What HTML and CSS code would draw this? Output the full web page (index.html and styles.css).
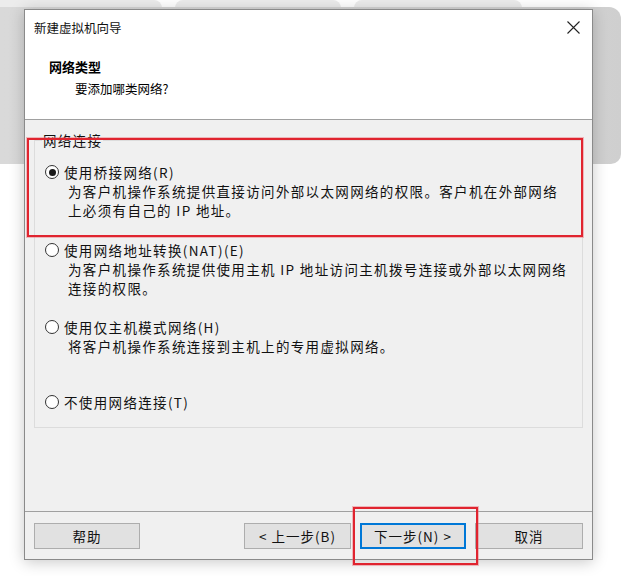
FILE: index.html
```html
<!DOCTYPE html>
<html lang="zh-CN">
<head>
<meta charset="utf-8">
<title>新建虚拟机向导</title>
<link rel="stylesheet" href="styles.css">
</head>
<body>
<div class="desk">
  <div class="tab tab1"></div>
  <div class="tab tab2"></div>
  <div class="tab tab3"></div>
  <div class="backpanel"></div>

  <div class="dialog">
    <div class="header">
      <div class="titlebar">
        <span class="title">新建虚拟机向导</span>
        <svg class="close" width="13" height="13" viewBox="0 0 13 13"><path d="M0.5 0.5L12.5 12.5M12.5 0.5L0.5 12.5" stroke="#222" stroke-width="1.1" fill="none"/></svg>
      </div>
      <div class="h-main">网络类型</div>
      <div class="h-sub">要添加哪类网络?</div>
    </div>

    <div class="body">
      <fieldset class="group">
        <legend>网络连接</legend>
        <div class="opt opt1">
          <span class="radio checked"></span>
          <span class="lbl">使用桥接网络(R)</span>
          <span class="desc">为客户机操作系统提供直接访问外部以太网网络的权限。客户机在外部网络<br>上必须有自己的 IP 地址。</span>
        </div>
        <div class="opt opt2">
          <span class="radio"></span>
          <span class="lbl">使用网络地址转换(NAT)(E)</span>
          <span class="desc">为客户机操作系统提供使用主机 IP 地址访问主机拨号连接或外部以太网网络<br>连接的权限。</span>
        </div>
        <div class="opt opt3">
          <span class="radio"></span>
          <span class="lbl">使用仅主机模式网络(H)</span>
          <span class="desc">将客户机操作系统连接到主机上的专用虚拟网络。</span>
        </div>
        <div class="opt opt4">
          <span class="radio"></span>
          <span class="lbl">不使用网络连接(T)</span>
        </div>
      </fieldset>
    </div>

    <div class="footer">
      <button class="btn b-help">帮助</button>
      <span class="spacer"></span>
      <button class="btn b-back">&lt; 上一步(B)</button>
      <button class="btn b-next">下一步(N) &gt;</button>
      <button class="btn b-cancel">取消</button>
    </div>
  </div>

  <div class="mark mark1"></div>
  <div class="mark mark2"></div>
</div>
</body>
</html>
```

FILE: styles.css
```css
* { box-sizing: border-box; }
html, body {
  margin: 0;
  padding: 0;
  background: #ffffff;
  width: 623px;
  height: 576px;
  overflow: hidden;
}
body {
  font-family: "Noto Sans CJK SC", "Noto Sans", sans-serif;
  color: #000;
}
.desk {
  position: relative;
  width: 623px;
  height: 576px;
}
.tab {
  position: absolute;
  top: 0;
  height: 12px;
  background: #ececec;
  border-radius: 8px 8px 0 0;
}
.tab1 { left: -10px; width: 172px; }
.tab2 { left: 175px; width: 166px; }
.tab3 { left: 354px; width: 168px; }
.backpanel {
  position: absolute;
  left: 0;
  top: 7px;
  width: 621px;
  height: 157px;
  background: linear-gradient(90deg, #d9d9d9 0%, #d2d2d2 90%, #cfcfcf 100%);
  border-radius: 0 12px 10px 0;
}
.dialog {
  position: absolute;
  left: 24px;
  top: 9px;
  width: 569px;
  height: 551px;
  border: 1px solid #8a8a8a;
  background: #f0f0f0;
  display: flex;
  flex-direction: column;
  box-shadow: 0 2px 14px rgba(0, 0, 0, 0.22);
}
.header {
  height: 110px;
  background: #ffffff;
  border-bottom: 1px solid #a0a0a0;
}
.titlebar {
  height: 36px;
  display: flex;
  align-items: center;
  justify-content: space-between;
  padding: 0 12px 0 9px;
}
.title {
  font-size: 12.5px;
  line-height: 18px;
  color: #111;
}
.close { display: block; margin-top: -1px; }
.h-main {
  margin-top: 12px;
  padding-left: 24px;
  font-size: 13px;
  font-weight: bold;
  line-height: 18px;
}
.h-sub {
  margin-top: 4px;
  padding-left: 50px;
  font-size: 12.5px;
  line-height: 18px;
}
.body {
  height: 391px;
  padding: 10px 9px 0 9px;
}
.group {
  margin: 0;
  width: 549px;
  height: 298px;
  border: 1px solid #dcdcdc;
  padding: 12px 10px 0 10px;
}
.group legend {
  margin-left: -3px;
  padding: 0 1px;
  font-size: 13.5px;
  letter-spacing: 1.3px;
  line-height: 20px;
  color: #111;
}
.opt {
  display: grid;
  grid-template-columns: 14px 1fr;
  column-gap: 5px;
  align-content: start;
  font-size: 13.5px;
  letter-spacing: 1.35px;
  color: #111;
}
.opt1 { height: 78px; }
.opt2 { height: 77px; }
.opt3 { height: 75px; }
.opt4 { height: 20px; }
.radio {
  grid-column: 1;
  grid-row: 1;
  align-self: center;
  width: 14px;
  height: 14px;
  border: 1px solid #333;
  border-radius: 50%;
  background: #fff;
  position: relative;
}
.radio.checked::after {
  content: "";
  position: absolute;
  left: 2.5px;
  top: 2.5px;
  width: 7px;
  height: 7px;
  border-radius: 50%;
  background: #1a1a1a;
}
.lbl {
  grid-column: 2;
  grid-row: 1;
  line-height: 20px;
  white-space: nowrap;
}
.desc {
  grid-column: 2;
  grid-row: 2;
  padding-left: 4px;
  line-height: 19px;
  white-space: nowrap;
}
.footer {
  flex: 1;
  border-top: 1px solid #a0a0a0;
  display: flex;
  align-items: flex-start;
  padding: 11px 9px 0 9px;
}
.spacer { flex: 1; }
.btn {
  height: 26px;
  margin: 0;
  padding: 0;
  background: #e1e1e1;
  border: 1px solid #adadad;
  font-family: "Noto Sans CJK SC", "Noto Sans", sans-serif;
  font-size: 13.5px;
  letter-spacing: 1px;
  color: #111;
  line-height: 22px;
}
.b-help { width: 106px; }
.b-back { width: 107px; }
.b-next {
  width: 106px;
  margin-left: 9px;
  border: 2px solid #0078d7;
}
.b-cancel { width: 108px; margin-left: 9px; }
.mark {
  position: absolute;
  border: 2px solid #e0242f;
  box-shadow: 0 0 0 1px rgba(235, 110, 120, 0.45);
}
.mark1 { left: 27px; top: 138px; width: 556px; height: 99px; }
.mark2 { left: 353px; top: 507px; width: 125px; height: 58px; }
```
